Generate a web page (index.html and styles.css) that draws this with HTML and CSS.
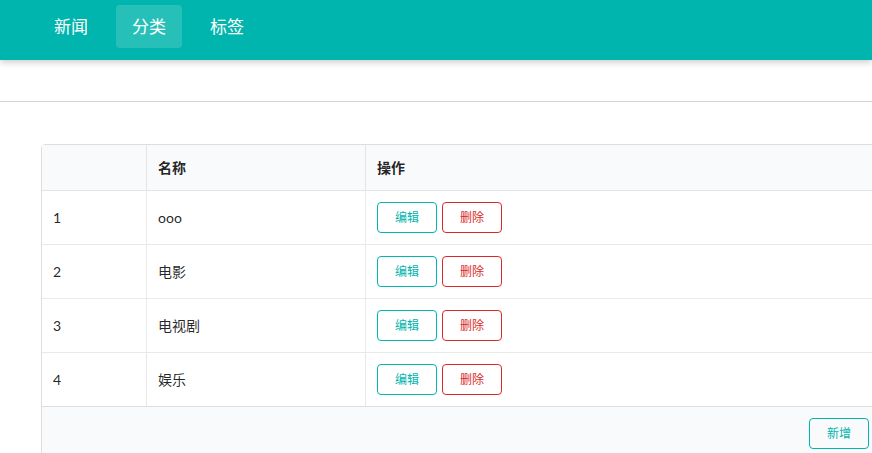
FILE: index.html
```html
<!DOCTYPE html>
<html lang="zh">
<head>
<meta charset="utf-8">
<title>分类</title>
<link rel="stylesheet" href="styles.css">
</head>
<body>
<header class="nav">
  <a class="nav-item">新闻</a>
  <a class="nav-item active">分类</a>
  <a class="nav-item">标签</a>
</header>
<div class="bar"></div>
<main class="content">
  <table class="grid">
    <thead>
      <tr><th class="c1"></th><th class="c2">名称</th><th class="c3">操作</th></tr>
    </thead>
    <tbody>
      <tr><td>1</td><td>ooo</td><td><button class="btn teal">编辑</button><button class="btn red">删除</button></td></tr>
      <tr><td>2</td><td>电影</td><td><button class="btn teal">编辑</button><button class="btn red">删除</button></td></tr>
      <tr><td>3</td><td>电视剧</td><td><button class="btn teal">编辑</button><button class="btn red">删除</button></td></tr>
      <tr><td>4</td><td>娱乐</td><td><button class="btn teal">编辑</button><button class="btn red">删除</button></td></tr>
    </tbody>
    <tfoot>
      <tr><th colspan="3" class="foot"><button class="btn teal">新增</button></th></tr>
    </tfoot>
  </table>
</main>
</body>
</html>
```
FILE: styles.css
```css
html, body {
  margin: 0;
  padding: 0;
  overflow: hidden;
  background: #fff;
}
body {
  font-family: Lato, "Noto Sans CJK SC", "Helvetica Neue", Arial, sans-serif;
  font-size: 14px;
  color: rgba(0, 0, 0, 0.87);
  width: 872px;
  height: 453px;
}
.nav {
  position: relative;
  z-index: 2;
  height: 60px;
  box-sizing: border-box;
  background: #00b5ad;
  display: flex;
  align-items: flex-start;
  gap: 12px;
  padding: 5px 0 0 38px;
  box-shadow: 0 2px 7px rgba(0, 0, 0, 0.22);
}
.nav-item {
  display: block;
  height: 43px;
  line-height: 43px;
  padding: 0 16px;
  font-size: 17px;
  color: #fff;
  border-radius: 4px;
  cursor: pointer;
}
.nav-item.active {
  background: rgba(255, 255, 255, 0.15);
}
.bar {
  height: 41px;
  border-bottom: 1px solid #d4d4d5;
}
.content {
  padding: 42px 0 0 41px;
}
.grid {
  width: 840px;
  border: 1px solid rgba(34, 36, 38, 0.15);
  border-radius: 4px;
  border-collapse: separate;
  border-spacing: 0;
  font-size: 14px;
}
.grid th, .grid td {
  text-align: left;
  vertical-align: middle;
}
.grid thead th {
  background: #f9fafb;
  font-weight: 700;
  padding: 13px 11px 12px;
  line-height: 20px;
  border-bottom: 1px solid rgba(34, 36, 38, 0.1);
}
.grid thead th + th, .grid td + td {
  border-left: 1px solid rgba(34, 36, 38, 0.1);
}
.grid .c1 { width: 82px; }
.grid .c2 { width: 196px; }
.grid td {
  padding: 11px 11px;
  line-height: 20px;
  border-bottom: 1px solid rgba(34, 36, 38, 0.1);
}
.grid tbody tr:last-child td {
  border-bottom: 1px solid rgba(34, 36, 38, 0.15);
}
.grid .foot {
  background: #f9fafb;
  padding: 11px 11px;
  text-align: right;
  font-weight: 400;
}
.btn {
  display: inline-block;
  vertical-align: middle;
  width: 60px;
  height: 31px;
  box-sizing: border-box;
  padding: 0;
  margin: 0 5px 0 0;
  background: transparent;
  border: 1px solid;
  border-radius: 4px;
  font-family: Lato, "Noto Sans CJK SC", sans-serif;
  font-size: 12px;
  line-height: 29px;
  cursor: pointer;
}
.foot .btn { margin: 0; }
.btn.teal {
  color: #00b5ad;
  border-color: #00b5ad;
}
.btn.red {
  color: #db2828;
  border-color: #db2828;
}
```
